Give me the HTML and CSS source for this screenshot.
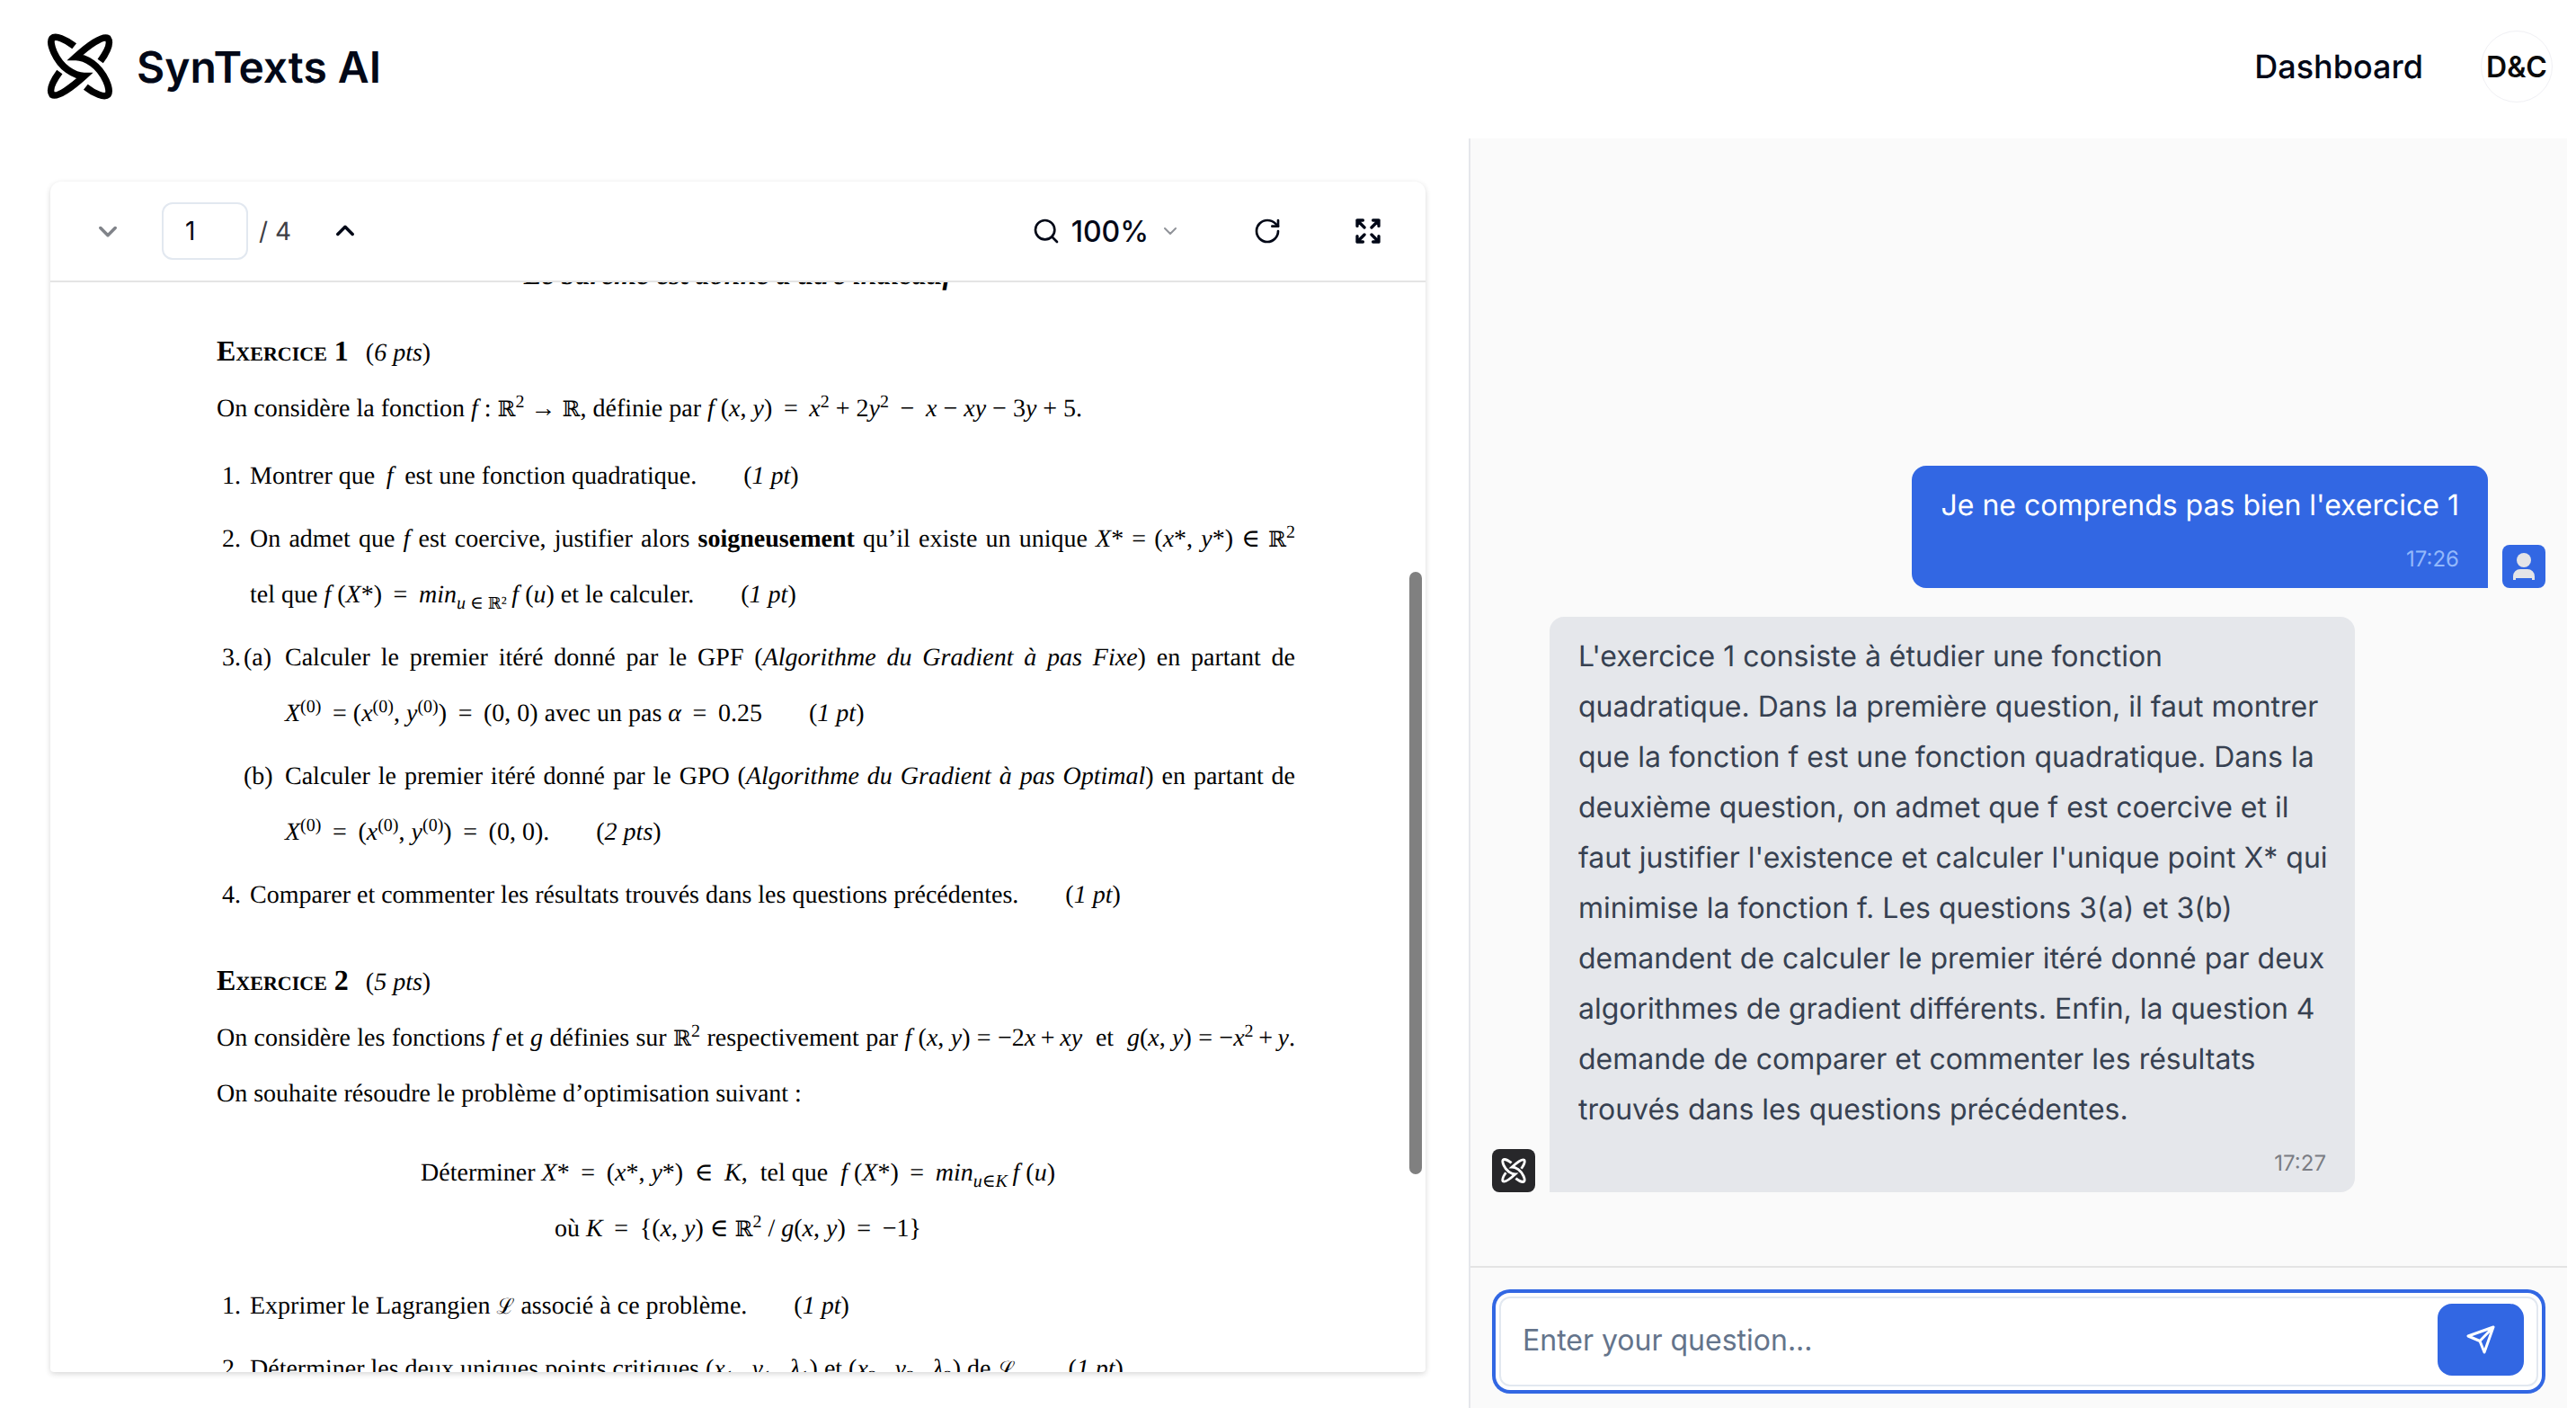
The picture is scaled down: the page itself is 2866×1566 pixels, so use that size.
FILE: index.html
```html
<!DOCTYPE html>
<html lang="fr">
<head>
<meta charset="utf-8">
<title>SynTexts AI</title>
<link rel="stylesheet" href="styles.css">
</head>
<body>
<svg class="defs" aria-hidden="true">
  <symbol id="logo" viewBox="26 24 220 222">
    <g fill="none" stroke="currentColor" stroke-width="23" stroke-miterlimit="8">
      <path d="M117 67C88 44 54 30 43 41C31 56 54 116 95 146C115 160 135 167 150 167C108 205 60 240 43 229C32 214 44 186 68 153"/>
      <path d="M155 203C184 226 218 240 229 229C241 214 218 154 177 124C157 110 137 103 122 103C164 65 212 30 229 41C240 56 228 84 204 117"/>
    </g>
  </symbol>
</svg>
<div class="app">
  <header class="header">
    <a class="brand" href="#"><svg class="brand-logo"><use href="#logo"/></svg><span>SynTexts AI</span></a>
    <nav class="nav">
      <a class="nav-link" href="#">Dashboard</a>
      <button class="avatar" type="button">D&amp;C</button>
    </nav>
  </header>
  <main class="main">
    <section class="viewer">
      <div class="toolbar">
        <div class="pager">
          <button class="tool muted" type="button" aria-label="Page précédente" disabled><svg class="icon" viewBox="0 0 24 24"><path d="m5 9 7 7 7-7"/></svg></button>
          <input class="page-input" id="page" type="text" value="1" aria-label="Page">
          <label class="page-total" for="page">/ 4</label>
          <button class="tool" type="button" aria-label="Page suivante"><svg class="icon" viewBox="0 0 24 24"><path d="m5 15 7-7 7 7"/></svg></button>
        </div>
        <div class="actions">
          <button class="zoom" type="button">
            <svg class="icon icon-lg" viewBox="0 0 24 24"><circle cx="11" cy="11" r="8"/><path d="m21 21-4.300-4.300"/></svg>
            <span>100%</span>
            <svg class="icon caret" viewBox="0 0 24 24"><path d="m6 9 6 6 6-6"/></svg>
          </button>
          <button class="tool" type="button" aria-label="Pivoter"><svg class="icon icon-lg" viewBox="0 0 24 24"><path d="M21 12a9 9 0 1 1-9-9c2.520 0 4.930 1 6.740 2.740L21 8"/><path d="M21 3v5h-5"/></svg></button>
          <button class="tool" type="button" aria-label="Plein écran"><svg class="icon icon-lg bold" viewBox="0 0 24 24"><path d="m15 15 6 6m-6-6m6 1.200V21h-4.800M3 16.200V21h4.800M3 21l6-6M3 7.800V3h4.800M9 9 3 3m18 4.800V3h-4.800M15 9l6-6"/></svg></button>
        </div>
      </div>
      <div class="pages">
        <article class="sheet">
          <p class="line display notice"><b><i>Le barème est donné à titre indicatif</i></b></p>

          <h2 class="line"><b>Exercice 1</b> <span class="title-pts">(<i>6 pts</i>)</span></h2>
          <p class="line">On considère la fonction <i>f</i> : <span class="bb">ℝ</span><sup>2</sup> → <span class="bb">ℝ</span>, définie par <i>f</i> (<i>x</i>, <i>y</i>) &thinsp;=&thinsp; <i>x</i><sup>2</sup> + 2<i>y</i><sup>2</sup> &thinsp;−&thinsp; <i>x</i> − <i>xy</i> − 3<i>y</i> + 5.</p>
          <ol class="questions">
            <li><span class="num">1.</span><div class="line">Montrer que &thinsp;<i>f</i>&thinsp; est une fonction quadratique.<span class="pts">(<i>1 pt</i>)</span></div></li>
            <li><span class="num">2.</span><div>
              <div class="line full">On admet que <i>f</i> est coercive, justifier alors <b>soigneusement</b> qu’il existe un unique <i>X</i>* = (<i>x</i>*, <i>y</i>*) ∈ <span class="bb">ℝ</span><sup>2</sup></div>
              <div class="line">tel que <i>f</i> (<i>X</i>*) &thinsp;=&thinsp; <i>min</i><sub><i>u</i> ∈ <span class="bb">ℝ</span>²</sub>&thinsp;<i>f</i> (<i>u</i>) et le calculer.<span class="pts">(<i>1 pt</i>)</span></div></div></li>
            <li><span class="num">3.</span><ol class="parts">
              <li><span class="part">(a)</span><div>
                <div class="line full">Calculer le premier itéré donné par le GPF (<i>Algorithme du Gradient à pas Fixe</i>) en partant de</div>
                <div class="line"><i>X</i><sup>(0)</sup> &thinsp;= (<i>x</i><sup>(0)</sup>, <i>y</i><sup>(0)</sup>) &thinsp;=&thinsp; (0, 0) avec un pas <i>α</i> &thinsp;=&thinsp; 0.25<span class="pts">(<i>1 pt</i>)</span></div></div></li>
              <li><span class="part">(b)</span><div>
                <div class="line full">Calculer le premier itéré donné par le GPO (<i>Algorithme du Gradient à pas Optimal</i>) en partant de</div>
                <div class="line"><i>X</i><sup>(0)</sup> &thinsp;=&thinsp; (<i>x</i><sup>(0)</sup>, <i>y</i><sup>(0)</sup>) &thinsp;=&thinsp; (0, 0).<span class="pts">(<i>2 pts</i>)</span></div></div></li>
            </ol></li>
            <li><span class="num">4.</span><div class="line">Comparer et commenter les résultats trouvés dans les questions précédentes.<span class="pts">(<i>1 pt</i>)</span></div></li>
          </ol>

          <h2 class="line second"><b>Exercice 2</b> <span class="title-pts">(<i>5 pts</i>)</span></h2>
          <p class="line full">On considère les fonctions <i>f</i> et <i>g</i> définies sur <span class="bb">ℝ</span><sup>2</sup> respectivement par <i>f</i> (<i>x</i>, <i>y</i>) = −2<i>x</i>&thinsp;+&thinsp;<i>xy</i>&nbsp; et&nbsp; <i>g</i>(<i>x</i>, <i>y</i>) = −<i>x</i><sup>2</sup>&thinsp;+&thinsp;<i>y</i>.</p>
          <p class="line">On souhaite résoudre le problème d’optimisation suivant :</p>
          <div class="problem">
            <p class="line display">Déterminer <i>X</i>* &thinsp;=&thinsp; (<i>x</i>*, <i>y</i>*) &thinsp;∈&thinsp; <i>K</i>,&nbsp; tel que&nbsp; <i>f</i> (<i>X</i>*) &thinsp;=&thinsp; <i>min</i><sub><i>u</i>∈<i>K</i></sub>&thinsp;<i>f</i> (<i>u</i>)</p>
            <p class="line display">où <i>K</i> &thinsp;=&thinsp; {(<i>x</i>, <i>y</i>) ∈ <span class="bb">ℝ</span><sup>2</sup> / <i>g</i>(<i>x</i>, <i>y</i>) &thinsp;=&thinsp; −1}</p>
          </div>
          <ol class="questions">
            <li><span class="num">1.</span><div class="line">Exprimer le Lagrangien <span class="cal">ℒ</span> associé à ce problème.<span class="pts">(<i>1 pt</i>)</span></div></li>
            <li><span class="num">2.</span><div class="line">Déterminer les deux uniques points critiques (<i>x</i><sub>1</sub>, &thinsp;<i>y</i><sub>1</sub>, &thinsp;<i>λ</i><sub>1</sub>) et (<i>x</i><sub>2</sub>, &thinsp;<i>y</i><sub>2</sub>, &thinsp;<i>λ</i><sub>2</sub>) de <span class="cal">ℒ</span>.<span class="pts">(<i>1 pt</i>)</span></div></li>
          </ol>
        </article>
        <div class="thumb"></div>
      </div>
    </section>

    <section class="chat">
      <div class="messages">
        <div class="message mine">
          <div class="bubble"><p>Je ne comprends pas bien l'exercice 1</p><time>17:26</time></div>
          <svg class="badge" viewBox="0 0 48 48"><circle cx="24" cy="17" r="8"/><path d="M12 39v-4a8 8 0 0 1 8-8h8a8 8 0 0 1 8 8v4h-3v-2H15v2z"/></svg>
        </div>
        <div class="message theirs">
          <div class="badge"><svg class="badge-logo"><use href="#logo"/></svg></div>
          <div class="bubble"><p>L'exercice 1 consiste à étudier une fonction quadratique. Dans la première question, il faut montrer que la fonction f est une fonction quadratique. Dans la deuxième question, on admet que f est coercive et il faut justifier l'existence et calculer l'unique point X* qui minimise la fonction f. Les questions 3(a) et 3(b) demandent de calculer le premier itéré donné par deux algorithmes de gradient différents. Enfin, la question 4 demande de comparer et commenter les résultats trouvés dans les questions précédentes.</p><time>17:27</time></div>
        </div>
      </div>
      <form class="composer">
        <div class="field">
          <input class="question" type="text" placeholder="Enter your question..." aria-label="Question">
          <button class="send" type="button" aria-label="Envoyer"><svg viewBox="0 0 32 32"><path d="M30 2 2 12l13 5.500L20 30zM30 2 15 17.500"/></svg></button>
        </div>
      </form>
    </section>
  </main>
</div>
</body>
</html>
```
FILE: styles.css
```css
* { box-sizing: border-box; margin: 0; padding: 0; }
body { font-family: Inter, "Liberation Sans", sans-serif; font-size: 32px; color: #020817; background: #fff; text-rendering: geometricPrecision; }
button, input { font: inherit; color: inherit; background: none; border: 0; }
a { color: inherit; text-decoration: none; }
ol { list-style: none; }
.defs { position: absolute; width: 0; height: 0; }

.app { height: 100vh; display: flex; flex-direction: column; overflow: hidden; }
.header { height: 154px; flex: none; display: flex; align-items: center; justify-content: space-between; padding: 0 26px 6px 52px; }
.brand { display: flex; align-items: center; gap: 26px; font-size: 48px; font-weight: 600; }
.brand-logo { width: 74px; height: 74px; color: #000; }
.nav { display: flex; align-items: center; gap: 64px; }
.nav-link { font-size: 36px; font-weight: 500; }
.avatar { width: 80px; height: 80px; border: 1px solid #f0f0f4; border-radius: 50%; font-weight: 600; color: #0a0a0a; }

.main { flex: 1; min-height: 0; display: grid; grid-template-columns: minmax(0, 1fr) min(1222px, 43%); margin-right: 10px; }

.viewer { min-height: 0; margin: 48px 48px 40px 56px; display: flex; flex-direction: column; border-radius: 12px 12px 4px 4px; overflow: hidden; box-shadow: 0 2px 6px rgba(0, 0, 0, .16); }
.toolbar { flex: none; height: 112px; border-bottom: 2px solid #e4e4e4; display: flex; align-items: center; justify-content: space-between; padding: 0 32px; }
.pager, .actions { display: flex; align-items: center; }
.actions { gap: 48px; }
.tool { width: 64px; height: 64px; display: grid; place-items: center; }
.tool.muted { color: #808389; }
.icon { width: 28px; height: 28px; fill: none; stroke: currentColor; stroke-width: 3; stroke-linecap: round; stroke-linejoin: round; }
.icon-lg { width: 32px; height: 32px; stroke-width: 2; }
.icon.bold { stroke-width: 2.5; }
.icon.caret { width: 24px; height: 24px; stroke-width: 2; color: #909399; }
.page-input { width: 96px; height: 64px; margin: 0 12px 0 28px; padding: 0 24px; border: 2px solid #e2e8f0; border-radius: 12px; font-size: 28px; }
.page-total { margin-right: 28px; font-size: 28px; color: #3f3f46; }
.zoom { display: flex; align-items: center; margin-right: 16px; font-weight: 500; }
.zoom span { margin: 0 12px; }

.pages { position: relative; flex: 1; min-height: 0; overflow: hidden; }
.thumb { position: absolute; top: 322px; right: 4px; width: 14px; height: 670px; border-radius: 7px; background: #808080; }
.sheet { margin-top: -37px; padding: 0 145px 0 185px; font-family: "Liberation Serif", "DejaVu Serif", serif; font-size: 28px; color: #000; }
.line { line-height: 62px; white-space: nowrap; font-size: 28px; font-weight: 400; }
.full { text-align: justify; text-align-last: justify; }
.display { text-align: center; padding-right: 40px; }
.notice { margin-bottom: 23px; }
.notice b, .sheet h2 b { font-size: 32px; line-height: 0; }
.sheet h2 b { font-variant: small-caps; }
.title-pts { margin-left: 12px; }
.second { margin-top: 35px; }
.sheet sup, .sheet sub { font-size: 20px; line-height: 0; }
.bb, .cal { font-size: 24px; line-height: 0; }
sub .bb { font-size: 18px; }
.questions { margin-top: 13px; display: grid; gap: 8px; }
.questions > li { display: grid; grid-template-columns: 31px minmax(0, 1fr); padding-left: 6px; line-height: 62px; }
.parts { display: grid; gap: 8px; }
.parts li { display: grid; grid-template-columns: 46px minmax(0, 1fr); margin-left: -7px; }
.pts { margin-left: 52px; }
.problem { margin: 26px 0 24px; }

.chat { min-height: 0; display: flex; flex-direction: column; background: #fafafa; border-left: 2px solid #e5e7eb; }
.messages { flex: 1; min-height: 0; display: flex; flex-direction: column; justify-content: flex-end; gap: 32px; padding: 0 24px 82px; }
.message { display: flex; align-items: flex-end; gap: 16px; }
.mine { justify-content: flex-end; }
.bubble { max-width: 896px; padding: 16px 32px; border-radius: 16px; display: flex; flex-direction: column; gap: 16px; line-height: 56px; }
.bubble time { align-self: flex-end; font-size: 24px; line-height: 32px; }
.mine .bubble { background: #3267e3; color: #fff; border-bottom-right-radius: 0; }
.mine time { color: #93b8fb; }
.theirs .bubble { background: #e5e7eb; color: #374151; border-bottom-left-radius: 0; }
.theirs p { margin-right: -8px; }
.theirs time { color: #7b7d84; }
.badge { flex: none; width: 48px; height: 48px; border-radius: 8px; background: #3267e3; fill: #e4e4e7; }
.theirs .badge { background: #27272a; color: #fff; display: grid; place-items: center; }
.badge-logo { width: 28px; height: 28px; }

.composer { flex: none; border-top: 2px solid #e4e4e4; padding: 32px 32px 24px; }
.field { height: 100px; display: flex; align-items: center; padding: 0 14px 4px 24px; background: #fff; border: 2px solid #e2e8f0; border-radius: 12px; box-shadow: 0 0 0 4px #fff, 0 0 0 8px #3267e3; }
.question { flex: 1; min-width: 0; height: 80px; outline: 0; }
.question::placeholder { color: #64748b; opacity: 1; }
.send { width: 96px; height: 80px; display: grid; place-items: center; background: #3267e3; border-radius: 16px; }
.send svg { width: 32px; height: 32px; fill: none; stroke: #fff; stroke-width: 3; stroke-linejoin: round; stroke-linecap: round; }
```
